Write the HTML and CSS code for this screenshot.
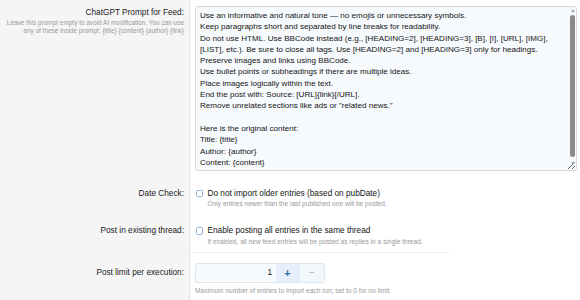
FILE: index.html
```html
<!DOCTYPE html>
<html lang="en">
<head>
<meta charset="UTF-8">
<meta name="viewport" content="width=device-width, initial-scale=1.0">
<title>Feed Options</title>
<link rel="stylesheet" href="styles.css">
</head>
<body>
<div class="block-body">
  <!-- PROMPT -->
  <dl class="form-row">
    <dt>
      <label class="row-label" for="prompt">ChatGPT Prompt for Feed:</label>
      <dfn class="row-hint">Leave this prompt empty to avoid AI modification. You can use any of these inside prompt: {title} {content} {author} {link}</dfn>
    </dt>
    <dd>
      <div class="prompt-wrap">
<textarea id="prompt" class="input prompt-area" rows="14">Use an informative and natural tone — no emojis or unnecessary symbols.
Keep paragraphs short and separated by line breaks for readability.
Do not use HTML. Use BBCode instead (e.g., [HEADING=2], [HEADING=3], [B], [I], [URL], [IMG], [LIST], etc.). Be sure to close all tags. Use [HEADING=2] and [HEADING=3] only for headings.
Preserve images and links using BBCode.
Use bullet points or subheadings if there are multiple ideas.
Place images logically within the text.
End the post with: Source: [URL]{link}[/URL].
Remove unrelated sections like ads or "related news."

Here is the original content:
Title: {title}
Author: {author}
Content: {content}
</textarea>
        <div class="scrollbar" aria-hidden="true">
          <span class="sb-up"></span>
          <span class="sb-thumb"></span>
          <span class="sb-down"></span>
        </div>
      </div>
    </dd>
  </dl>

  <!-- DATE CHECK -->
  <dl class="form-row">
    <dt><label class="row-label">Date Check:</label></dt>
    <dd>
      <label class="check"><input type="checkbox"><span>Do not import older entries (based on pubDate)</span></label>
      <dfn class="check-hint">Only entries newer than the last published one will be posted.</dfn>
    </dd>
  </dl>

  <!-- THREAD -->
  <dl class="form-row">
    <dt><label class="row-label">Post in existing thread:</label></dt>
    <dd>
      <label class="check"><input type="checkbox"><span>Enable posting all entries in the same thread</span></label>
      <dfn class="check-hint">If enabled, all new feed entries will be posted as replies in a single thread.</dfn>
    </dd>
  </dl>

  <hr class="row-sep">

  <!-- LIMIT -->
  <dl class="form-row row-number">
    <dt><label class="row-label" for="limit">Post limit per execution:</label></dt>
    <dd>
      <div class="input-number">
        <input id="limit" type="text" value="1">
        <button class="btn-up">+</button>
        <button class="btn-down">−</button>
      </div>
      <dfn class="row-explain">Maximum number of entries to import each run; set to 0 for no limit.</dfn>
    </dd>
  </dl>
</div>
</body>
</html>
```

FILE: styles.css
```css
:root { --dt:190px; --fs:8.25px; --lh:11.5px; --texto:#141414; --gris:#9a9a9a; --borde:#d8d8d8; --campo:#f7fafd; --azul:#2f6fa6; --dt-bg:#f5f5f5; }
* { margin:0; padding:0; box-sizing:border-box; }
body { font-family:'Liberation Sans',Arial,sans-serif; font-size:var(--fs); line-height:var(--lh); color:var(--texto); background:#fff; overflow:hidden; }
.block-body { width:580px; min-height:300px; background:linear-gradient(to right,var(--dt-bg) 0,var(--dt-bg) 189px,#e4e4e4 189px,#e4e4e4 190px,#fff 190px); }
dfn { font-style:normal; }

/* FORM ROWS */
.form-row { display:flex; }
.form-row dt { width:var(--dt); flex-shrink:0; padding:6.5px 6px 0 4px; text-align:right; }
.form-row dd { flex:1; padding:6px 3px 6px 5px; }
.row-label { display:block; font-size:var(--fs); line-height:var(--lh); color:#222; }
.row-hint { display:block; font-size:6.45px; line-height:8px; color:var(--gris); margin-top:0.5px; }
.form-row + .form-row dt { padding-top:10.5px; }
.form-row + .form-row dd { padding-top:10.5px; padding-bottom:6.5px; }

/* TEXTAREA */
.prompt-wrap { position:relative; }
.input { font-family:'Liberation Sans',Arial,sans-serif; color:var(--texto); background:var(--campo); border:1px solid var(--borde); border-radius:3px; outline:none; }
.prompt-area { display:block; width:100%; height:165px; padding:3px 12px 4px 4px; font-size:8.07px; line-height:11.3px; resize:vertical; overflow:hidden; }
.scrollbar { position:absolute; top:1px; right:1px; width:7px; height:161px; pointer-events:none; }
.sb-up, .sb-down { position:absolute; left:1.5px; width:0; height:0; border-left:2px solid transparent; border-right:2px solid transparent; }
.sb-up { top:2px; border-bottom:3px solid #a3a3a3; }
.sb-down { bottom:3px; border-top:3px solid #a3a3a3; }
.sb-thumb { position:absolute; top:8px; left:1px; width:5px; height:142px; background:#8b8b8b; border-radius:3px; }

/* CHECKBOXES */
.check { display:flex; align-items:center; gap:4.5px; color:var(--texto); }
.check input { appearance:none; width:7.5px; height:7.5px; border:1px solid #8fb3d6; border-radius:1.5px; background:#fff; margin-left:0.5px; }
.check-hint { display:block; font-size:6.6px; line-height:9px; color:var(--gris); padding-left:12.5px; }

/* SEPARATOR */
.row-sep { border:none; border-top:1px solid #f1f1f1; margin:0 130px 0 var(--dt); }

/* NUMBER INPUT */
.row-number dt { padding-top:14px !important; }
.row-number dd { padding-top:10px !important; }
.input-number { display:flex; width:130px; height:19.5px; border:1px solid #dde6ef; border-radius:3px; overflow:hidden; background:var(--campo); }
.input-number input { flex:1; min-width:0; border:none; background:transparent; text-align:right; padding-right:4px; font-family:inherit; font-size:var(--fs); color:var(--texto); outline:none; }
.input-number button { border:none; font-family:inherit; cursor:pointer; }
.btn-up { width:23px; background:#e6eff9; color:var(--azul); font-size:11px; font-weight:700; }
.btn-down { width:25px; background:#f2f7fc; color:#9ab3cc; font-size:10px; border-left:1px solid #e2eaf3 !important; }
.row-explain { display:block; font-size:6.6px; line-height:9px; color:var(--gris); margin-top:3.5px; }
```
